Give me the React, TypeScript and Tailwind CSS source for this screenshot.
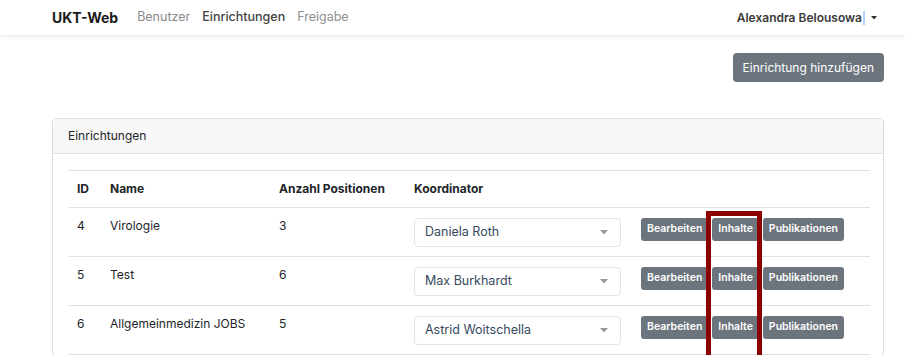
import React from "react";

const rows = [
  { id: 4, name: "Virologie", count: 3, coord: "Daniela Roth" },
  { id: 5, name: "Test", count: 6, coord: "Max Burkhardt" },
  { id: 6, name: "Allgemeinmedizin JOBS", count: 5, coord: "Astrid Woitschella" },
];

function Btn({ children }: { children: React.ReactNode }) {
  return (
    <button className="h-[23px] px-[6px] rounded-[3px] bg-[#6c757d] text-white text-[10.5px] font-semibold leading-none">
      {children}
    </button>
  );
}

export default function App() {
  return (
    <div
      className="relative w-[905px] h-[355px] overflow-hidden bg-white text-[#212529]"
      style={{ fontFamily: "Inter, 'Liberation Sans', sans-serif" }}
    >
      <nav className="relative z-10 h-[35px] flex items-center pl-[52px] pr-[28px] bg-white shadow-[0_2px_4px_rgba(0,0,0,0.08)]">
        <span className="text-[14px] font-bold text-[#1a1a1a] mr-[19px]">UKT-Web</span>
        <div className="flex items-center gap-[12px] text-[12.5px]">
          <span className="text-[#8a8a8a]">Benutzer</span>
          <span className="text-[#444] font-medium">Einrichtungen</span>
          <span className="text-[#8f8f8f]">Freigabe</span>
        </div>
        <div className="ml-auto flex items-center">
          <span className="text-[12px] font-semibold text-[#3a3a3a]">Alexandra Belousowa</span>
          <span className="w-[2px] h-[14px] bg-[#b3d1ff] ml-[1px]" />
          <svg width="6" height="4" viewBox="0 0 6 4" className="ml-[6px]">
            <path d="M0 0 L6 0 L3 3.5 Z" fill="#333" />
          </svg>
        </div>
      </nav>

      <div className="flex justify-end mt-[18px] mr-[21px]">
        <button className="h-[29px] px-[10px] rounded-[4px] bg-[#6c757d] text-white text-[12px]">
          Einrichtung hinzufügen
        </button>
      </div>

      <div className="mt-[36px] ml-[52px] w-[832px] border border-[#dfdfdf] rounded-[4px]">
        <div className="h-[35px] flex items-center px-[15px] bg-[#f7f7f7] border-b border-[#dfdfdf] text-[12px]">
          Einrichtungen
        </div>
        <div className="px-[15px] pt-[16px]">
          <table className="w-[802px] table-fixed border-collapse text-[12px]">
            <colgroup>
              <col className="w-[32px]" />
              <col className="w-[169px]" />
              <col className="w-[135px]" />
              <col className="w-[227px]" />
              <col className="w-[239px]" />
            </colgroup>
            <thead>
              <tr className="h-[37px] border-t border-b border-[#dee2e6]">
                <th className="text-left font-bold pl-[9px] pr-[10px]">ID</th>
                <th className="text-left font-bold px-[10px]">Name</th>
                <th className="text-left font-bold px-[10px]">Anzahl Positionen</th>
                <th className="text-left font-bold px-[10px]">Koordinator</th>
                <th className="px-[10px]"></th>
              </tr>
            </thead>
            <tbody>
              {rows.map((r) => (
                <tr key={r.id} className="h-[49px] border-b border-[#dee2e6]">
                  <td className="align-top pl-[9px] pr-[10px] pt-[10px] leading-[16px]">{r.id}</td>
                  <td className="align-top px-[10px] pt-[10px] leading-[16px]">{r.name}</td>
                  <td className="align-top px-[10px] pt-[10px] leading-[16px]">{r.count}</td>
                  <td className="align-top px-[10px] pt-[10px]">
                    <div className="h-[29px] w-[207px] flex items-center pl-[10px] pr-[12px] border border-[#e3e3e3] rounded-[4px] text-[12.5px] text-[#35495e]">
                      <span>{r.coord}</span>
                      <svg width="8" height="5" viewBox="0 0 8 5" className="ml-auto">
                        <path d="M0 0 L8 0 L4 4.5 Z" fill="#999" />
                      </svg>
                    </div>
                  </td>
                  <td className="align-top px-[10px] pt-[10px]">
                    <div className="flex gap-[4px]">
                      <Btn>Bearbeiten</Btn>
                      <Btn>Inhalte</Btn>
                      <Btn>Publikationen</Btn>
                    </div>
                  </td>
                </tr>
              ))}
            </tbody>
          </table>
        </div>
      </div>

      <div className="absolute left-[706px] top-[211px] w-[56px] h-[200px] border-[5px] border-[#8b0000]" />
    </div>
  );
}
